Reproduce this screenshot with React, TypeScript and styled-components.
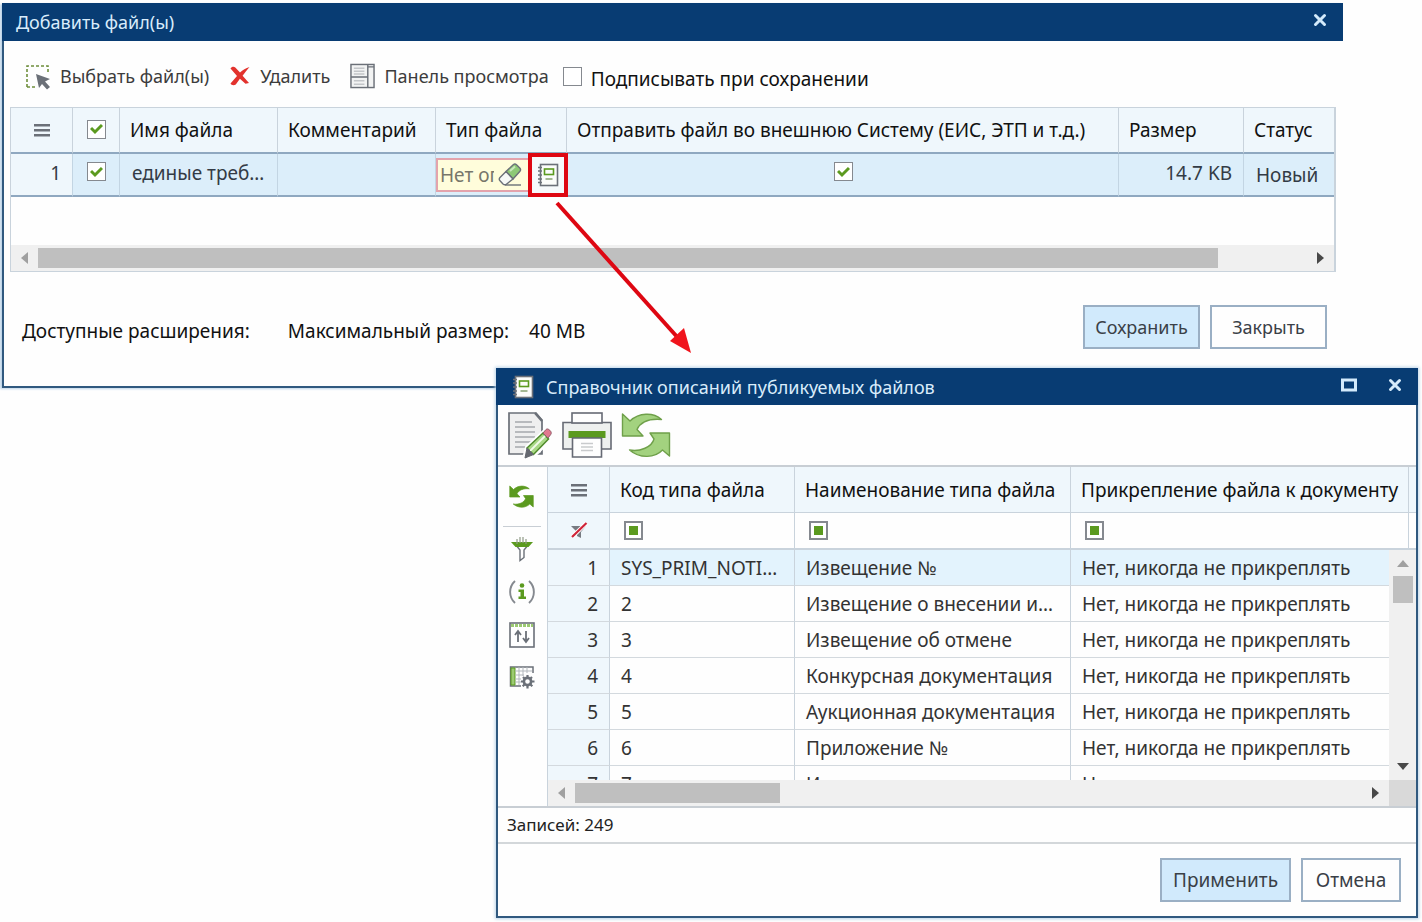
import React from "react";
import styled, { createGlobalStyle, css } from "styled-components";

const navy = "#083c73";
const line = "#c9d3dc";
const green = "#5b9a1f";
const grey = "#6b7078";

const GlobalStyle = createGlobalStyle`
  *, *::before, *::after { box-sizing: border-box; }
  body {
    margin: 0;
    background: #fefefe;
    color: #222;
    font-family: "Noto Sans", "Open Sans", sans-serif;
    font-size: 19px;
    line-height: 24px;
  }
  button, input { font: inherit; color: inherit; }
  button { cursor: pointer; }
  svg { display: block; flex: none; }
`;

const Desktop = styled.main`
  position: relative;
  min-height: 100vh;
  overflow: hidden;
`;

const Window = styled.section`
  position: absolute;
  display: flex;
  flex-direction: column;
  background: #fefefe;
  border: 2px solid #30597f;
  border-top: 0;
  box-shadow: 0 0 3px 1px #bcd4e8;
`;

const UploadWindow = styled(Window)`
  top: 3px;
  left: 2px;
  right: 79px;
  border-right: 0;
  box-shadow: -2px 1px 2px 0 #bcd4e8;
`;

const DirectoryWindow = styled(Window)`
  top: 368px;
  left: 496px;
  right: 4px;
`;

const TitleBar = styled.header<{ $inset?: boolean }>`
  display: flex;
  align-items: center;
  height: ${(p) => (p.$inset ? "37px" : "38px")};
  margin-left: -2px;
  margin-right: ${(p) => (p.$inset ? "-2px" : "0")};
  padding: 0 14px 0 ${(p) => (p.$inset ? "16px" : "14px")};
  background: ${navy};
  color: #d9ecfb;
`;

const Title = styled.h2<{ $gap?: boolean }>`
  flex: 1;
  margin: 0 0 0 ${(p) => (p.$gap ? "12px" : "0")};
  font-size: 18px;
  font-weight: 400;
`;

const TitleButton = styled.button`
  display: grid;
  place-items: center;
  width: 18px;
  height: 24px;
  margin-left: 28px;
  padding: 0 0 4px;
  border: 0;
  background: none;
`;

const Toolbar = styled.div`
  display: flex;
  align-items: center;
  gap: 20px;
  height: 66px;
  padding: 4px 20px 0;
`;

const ToolButton = styled.button`
  display: flex;
  align-items: center;
  gap: 9px;
  padding: 0;
  border: 0;
  background: none;
  color: #3c3c3c;
  font-size: 18px;
`;

const SignLabel = styled.label`
  display: flex;
  align-items: center;
  gap: 9px;
  margin-left: -6px;
  color: #111;
`;

const SignText = styled.span`
  padding-top: 6px;
`;

const CheckFrame = styled.span`
  display: inline-grid;
  vertical-align: middle;
  place-items: center;
  width: 19px;
  height: 19px;
  > * { grid-area: 1 / 1; }
  svg { pointer-events: none; }
`;

const CheckInput = styled.input`
  appearance: none;
  width: 19px;
  height: 19px;
  margin: 0;
  border: 1px solid #85898f;
  background: #fff;
  & + svg { visibility: hidden; }
  &:checked + svg { visibility: visible; }
`;

const Grid = styled.div`
  display: flex;
  flex-direction: column;
  margin: 0 7px 0 6px;
  border: 1px solid ${line};
  border-right: 2px solid ${line};
`;

const Table = styled.table`
  width: 100%;
  table-layout: fixed;
  border-collapse: separate;
  border-spacing: 0;
`;

const Col = styled.col<{ $w?: number }>`
  ${(p) => p.$w && css`width: ${p.$w}px;`}
`;

const HeadCell = styled.th<{ $center?: boolean }>`
  height: 46px;
  padding: 0 0 0 ${(p) => (p.$center ? "0" : "10px")};
  border-right: 1px solid ${line};
  border-bottom: 2px solid #8fa8c0;
  background: #eff7fc;
  color: #111;
  font-weight: 400;
  text-align: ${(p) => (p.$center ? "center" : "left")};
  white-space: nowrap;
  svg { margin: 0 auto; }
  ${CheckFrame} { margin-bottom: 4px; }
  &:last-child { border-right: 0; }
`;

const FileCell = styled.td<{ $align?: string; $tone?: string; $raised?: boolean }>`
  height: 43px;
  padding: 0 11px ${(p) => (p.$raised ? "4px" : "0")} 12px;
  border-right: 1px solid #c3d5e3;
  border-bottom: 2px solid #8fa8c0;
  background: ${(p) => p.$tone ?? "#dceefa"};
  color: #333b45;
  text-align: ${(p) => p.$align ?? "left"};
  white-space: nowrap;
  overflow: hidden;
  text-overflow: ellipsis;
  ${CheckFrame} { margin-bottom: 4px; }
  &:last-child { border-right: 0; }
`;

const FieldCell = styled(FileCell)`
  padding: 0;
  overflow: visible;
`;

const Field = styled.div`
  display: flex;
  align-items: center;
  height: 34px;
  border: 2px solid #e3a3ac;
  border-right: 0;
  background: #fffddb;
`;

const FieldInput = styled.input`
  width: 56px;
  padding: 0 0 0 2px;
  border: 0;
  background: none;
  color: #77766a;
`;

const IconButton = styled.button`
  display: grid;
  place-items: center;
  padding: 0;
  border: 0;
  background: none;
`;

const ClearButton = styled(IconButton)`
  margin-left: 3px;
`;

const PickButton = styled(IconButton)`
  position: relative;
  width: 34px;
  height: 36px;
  margin: 0 1px 0 auto;
  background: #f6f9fb;
  &::after {
    content: "";
    position: absolute;
    inset: -4px -3px;
    border: 4px solid #de0712;
  }
`;

const EmptyRows = styled.div`
  height: 48px;
`;

const HScroll = styled.div`
  display: flex;
  align-items: center;
  height: 26px;
  padding: 0 9px;
  background: #f0f0f0;
`;

const HTrack = styled.div`
  flex: 1;
  margin: 0 9px;
`;

const HThumb = styled.div<{ $share: string }>`
  width: ${(p) => p.$share};
  height: 20px;
  background: #bfbfbf;
`;

const UploadFooter = styled.footer`
  display: flex;
  align-items: center;
  gap: 10px;
  padding: 33px 16px 37px 18px;
  color: #111;
`;

const FooterText = styled.span`
  margin-top: 8px;
  margin-right: 28px;
`;

const SizeText = styled(FooterText)`
  display: flex;
  flex: 1;
  gap: 20px;
  margin-right: 0;
`;

const Button = styled.button<{ $primary?: boolean; $w: number; $large?: boolean }>`
  width: ${(p) => p.$w}px;
  height: 44px;
  padding: 0;
  border: 2px solid #9aafc4;
  background: ${(p) => (p.$primary ? "#d1eafc" : "#fefefe")};
  color: #3a4047;
  font-size: ${(p) => (p.$large ? 19 : 18)}px;
`;

const BigToolbar = styled.div`
  display: flex;
  align-items: center;
  gap: 9px;
  height: 60px;
  padding: 0 9px;
`;

const Content = styled.div`
  display: flex;
  border-top: 2px solid #c8ced4;
  border-bottom: 2px solid #c8ced4;
`;

const SideBar = styled.nav`
  display: flex;
  flex-direction: column;
  align-items: center;
  gap: 17px;
  width: 50px;
  padding: 17px 2px 0 0;
  border-right: 1px solid ${line};
`;

const SideDivider = styled.hr`
  width: 38px;
  margin: 0 0 -8px;
  border: 0;
  border-top: 1px solid #c8ced4;
`;

const DirectoryGrid = styled.div`
  display: flex;
  flex: 1;
  flex-direction: column;
  min-width: 0;
`;

const DirHead = styled(HeadCell)`
  border-bottom: 1px solid ${line};
`;

const FilterCell = styled.td<{ $tone?: string }>`
  height: 37px;
  padding: 0 0 0 14px;
  border-right: 1px solid ${line};
  border-bottom: 2px solid ${line};
  background: ${(p) => p.$tone ?? "#fefefe"};
  line-height: 0;
  &:last-child { border-right: 0; }
  &:first-child { padding: 0; svg { margin: 0 auto; } }
`;

const FilterButton = styled.button`
  width: 19px;
  height: 19px;
  padding: 0;
  border: 2px solid #85898f;
  background: ${green};
  box-shadow: inset 0 0 0 3px #fff;
`;

const DirBody = styled.div`
  display: flex;
  height: 230px;
`;

const Viewport = styled.div`
  flex: 1;
  min-width: 0;
  overflow: hidden;
`;

const DirCell = styled.td<{ $active?: boolean }>`
  height: 36px;
  padding: 0 11px;
  border-right: 1px solid ${line};
  border-bottom: 1px solid #d3d9de;
  background: ${(p) => (p.$active ? "#e3f3fd" : "#fefefe")};
  color: #333;
  white-space: nowrap;
  overflow: hidden;
  text-overflow: ellipsis;
  &:first-child { background: #eff7fc; text-align: right; }
  &:last-child { border-right: 0; }
`;

const VScroll = styled.div`
  display: flex;
  flex-direction: column;
  align-items: center;
  width: 27px;
  padding: 9px 0 9px;
  background: #f0f0f0;
`;

const VTrack = styled.div`
  flex: 1;
  padding-top: 8px;
`;

const VThumb = styled.div`
  width: 20px;
  height: 27px;
  background: #bfbfbf;
`;

const ScrollRow = styled.div`
  display: grid;
  grid-template-columns: 1fr 27px;
`;

const Corner = styled.div`
  height: 26px;
  background: #d9d9d9;
`;

const StatusBar = styled.div`
  height: 36px;
  padding: 5px 9px;
  border-bottom: 2px solid #d3d7da;
  font-size: 17px;
`;

const Actions = styled.footer`
  display: flex;
  justify-content: flex-end;
  gap: 10px;
  padding: 14px 15px 14px;
`;

const Pointer = styled.svg`
  position: absolute;
  top: 195px;
  left: 549px;
  pointer-events: none;
`;

const CloseIcon = () => (
  <svg width="16" height="16" viewBox="0 0 16 16" stroke="#d3eafb" strokeWidth="3" strokeLinecap="round">
    <path d="M3.500 3.500l9 9M12.500 3.500l-9 9" />
  </svg>
);

const MaximizeIcon = () => (
  <svg width="16" height="14" viewBox="0 0 16 14" fill="none" stroke="#d3eafb" strokeWidth="3">
    <rect x="1.500" y="2" width="13" height="10" />
  </svg>
);

const SelectIcon = () => (
  <svg width="27" height="27" viewBox="0 0 27 27">
    <path d="M3 24V3h21v8M3 24h8" fill="none" stroke="#6f8f3c" strokeWidth="1.600" strokeDasharray="3 2" />
    <path d="M12 11l14 5-5 2.500 5 5.500-3 2.500-5-5.500-3 4z" fill="#6b7078" />
  </svg>
);

const DeleteIcon = () => (
  <svg width="22" height="22" viewBox="0 0 22 22">
    <path d="M1.500 3.500c1-2 3.500-2.500 4.800-1L11 7.500C13.500 5 17 3 20.500 2 18 5 15.500 8 13.600 10.800l6.400 7.200-3.500.8-5.600-5L6.800 19.500c-2 1.300-4.500.7-5.300-1C3.500 16 6 13.500 8 11z" fill="#e2322d" />
  </svg>
);

const PanelIcon = () => (
  <svg width="25" height="26" viewBox="0 0 26 26" fill="none" stroke={grey} strokeWidth="1.500">
    <rect x="1" y="1" width="24" height="24" fill="#f2f3f3" />
    <path d="M18.500 1v24M1 14h17.500M18.500 3.500H25" />
    <path d="M4 5h11M4 8h11M4 11h11M4 18h11M4 21.500h11" stroke="#c3c6c9" />
  </svg>
);

const MenuIcon = () => (
  <svg width="16" height="14" viewBox="0 0 16 14" fill={grey}>
    <path d="M0 1h16v2.600H0zM0 6h16v2.600H0zM0 11h16v2.600H0z" />
  </svg>
);

const EraserIcon = () => (
  <svg width="26" height="26" viewBox="0 0 26 26" stroke={grey} strokeWidth="1.400" strokeLinejoin="round">
    <path d="M9 9.500L16.500 2.500c1-.8 2-.7 3 .2l3.500 3.500c.8 1 .7 2 0 3L16 17z" fill="#8ec976" />
    <path d="M9 9.500L3 15.500c-1 1.200-1 2.200 0 3.200l3 3.300c1 .8 2.600.9 3.700 0L16 17z" fill="#f7faf7" />
    <path d="M8 23h16" fill="none" />
    <path d="M13 9l5-4.500" stroke="#c9e8bd" strokeWidth="2" />
  </svg>
);

const NotebookIcon = () => (
  <svg width="22" height="24" viewBox="0 0 22 24" fill="none" stroke={grey}>
    <rect x="3.500" y="1.500" width="17" height="21" fill="#fbfcfa" strokeWidth="1.600" />
    <rect x="7.500" y="6" width="9" height="5.500" stroke={green} strokeWidth="1.600" />
    <path d="M8.500 16h7" stroke="#8fa77a" strokeWidth="1.600" />
    <path d="M1 4.500h4M1 8h4M1 12h4M1 16h4M1 19.500h4" strokeWidth="1.500" />
  </svg>
);

const EditDocIcon = () => (
  <svg width="46" height="50" viewBox="0 0 46 50">
    <path d="M2 3h27l6 7v34H2z" fill="#efefef" stroke={grey} strokeWidth="1.700" />
    <path d="M28 3l7 8" fill="none" stroke={grey} strokeWidth="2.400" />
    <path d="M8 12h17M8 17h20M8 22h20M8 27h20M8 32h17M8 37h12" stroke="#b8babd" strokeWidth="2" />
    <path d="M17 47l2.500-10L38 20l8 8-18 17z" fill="#fefefe" stroke="#fefefe" strokeWidth="3" />
    <path d="M20 38l16-15 5.500 6-15 15.500z" fill="#a9d886" stroke="#4f8a2a" strokeWidth="1.500" />
    <path d="M23 41l15-15" stroke="#f1fae8" strokeWidth="1.800" />
    <path d="M20 38l6.500 6.500L18 48z" fill="#656870" stroke="#656870" />
    <path d="M36 23l3-3.500c1.200-1 2.300-.6 3.800.8s2 3 .8 4.400L41 28z" fill="#e2788f" stroke="#8f5d68" />
    <path d="M32 44h3v-3z" fill={grey} />
  </svg>
);

const PrinterIcon = () => (
  <svg width="50" height="48" viewBox="0 0 50 48" stroke="#666a74" strokeWidth="1.600">
    <path d="M1 11.500h48V38H1z" fill="#eef0ef" />
    <rect x="10" y="2" width="30" height="10" fill="#fefefe" />
    <rect x="6.500" y="20" width="37" height="7" fill={green} stroke="none" />
    <path d="M10.500 27h29v19h-29z" fill="#fefefe" />
    <path d="M19 32.500h12M19 36h12M19 39.500h12" stroke="#c9cbcd" strokeWidth="1.400" />
  </svg>
);

const SyncIcon = ({ size, fill, stroke }: { size: number; fill: string; stroke: string }) => (
  <svg width={size} height={size} viewBox="0 0 50 48" fill={fill} stroke={stroke} strokeWidth="1.400" strokeLinejoin="round">
    <path d="M1.500 3V25H22L16 18.500C19.500 11 28.500 7.500 40.500 8.500 32 1 18 1.500 9 10z" />
    <path d="M48.500 22H29l4 6C31 36 19 41 8.500 39 19 48 34 47 41.500 39l7 6z" />
  </svg>
);

const ClearFilterIcon = () => (
  <svg width="18" height="18" viewBox="0 0 18 18">
    <path d="M1 4h15l-5 6v6l-4-2v-4z" fill="#777b82" />
    <path d="M2 15L16.500 1" stroke="#fff" strokeWidth="4" />
    <path d="M2 15L16.500 1" stroke="#cf2438" strokeWidth="2.200" />
  </svg>
);

const FunnelIcon = () => (
  <svg width="26" height="26" viewBox="0 0 26 26" fill="none" stroke={grey} strokeWidth="1.400">
    <path d="M6 8l5 6v10.500l4-3V14l5-6" fill="#fff" />
    <path d="M2 6h22l-4.500 5h-13z" fill={green} stroke="none" />
    <path d="M8 3v5M11 1v6M14 1v6M17 3v5" stroke="#8f9a86" strokeWidth="1.200" />
  </svg>
);

const InfoIcon = () => (
  <svg width="26" height="26" viewBox="0 0 26 26" fill="none">
    <path d="M6 2C-.5 8-.5 18 6 24M20 2c6.500 6 6.500 16 0 22" stroke="#85898f" strokeWidth="1.900" />
    <circle cx="13" cy="6.500" r="2.300" fill={green} />
    <path d="M9.500 10.500H15v7h2V20H9.500v-2.500h2V13h-2z" fill={green} />
  </svg>
);

const SortPanelIcon = () => (
  <svg width="26" height="26" viewBox="0 0 26 26" fill="none" stroke={grey}>
    <rect x="1" y="1" width="24" height="24" strokeWidth="1.600" fill="#fff" />
    <path d="M2 3.500h22" stroke="#9cca72" strokeWidth="3" strokeDasharray="3 1" />
    <path d="M9 20V9.500M6 13l3-4 3 4M17 9v10.500M14 16l3 4 3-4" strokeWidth="1.800" />
  </svg>
);

const TableSettingsIcon = () => (
  <svg width="26" height="26" viewBox="0 0 26 26" fill="none" stroke={grey}>
    <path d="M12 21H1.500V2H24v6" strokeWidth="1.500" />
    <path d="M2 3h4v17H2z" fill="#9cca72" stroke={green} />
    <path d="M10 2v18M14 2v9M18 2v6M6 6h17M6 10h9M6 14h6M6 17h6" stroke="#b3b8bd" />
    <circle cx="18.500" cy="16.500" r="3.600" strokeWidth="2.600" fill="#fff" />
    <path d="M18.500 10v3M18.500 20v3.500M12 16.500h3M22 16.500h3.500M14 12l2 2M21 19l2.300 2.300M23 12l-2 2M16 19l-2.300 2.300" strokeWidth="2.200" />
  </svg>
);

const arrows = {
  left: "M8 0v12L1 6z",
  right: "M1 0v12l7-6z",
  up: "M0 8h12L6 1z",
  down: "M0 1h12L6 8z",
};

const ScrollArrow = ({ dir, dim }: { dir: keyof typeof arrows; dim?: boolean }) => {
  const upright = dir === "up" || dir === "down";
  return (
    <svg width={upright ? 12 : 9} height={upright ? 9 : 12} fill={dim ? "#a0a0a0" : "#484848"}>
      <path d={arrows[dir]} />
    </svg>
  );
};

const Check = ({ label, id, on }: { label?: string; id?: string; on?: boolean }) => (
  <CheckFrame>
    <CheckInput type="checkbox" id={id} aria-label={label} defaultChecked={on} />
    <svg width="13" height="12" viewBox="0 0 13 12" fill="none" stroke={green} strokeWidth="3">
      <path d="M1 5l4 4 7-7" />
    </svg>
  </CheckFrame>
);

const directory = [
  ["SYS_PRIM_NOTICE", "Извещение №"],
  ["2", "Извещение о внесении изменений"],
  ["3", "Извещение об отмене"],
  ["4", "Конкурсная документация"],
  ["5", "Аукционная документация"],
  ["6", "Приложение №"],
  ["7", "Иное"],
];

const DirectoryCols = ({ tail }: { tail?: boolean }) => (
  <colgroup>
    <Col $w={62} />
    <Col $w={185} />
    <Col $w={276} />
    <Col />
    {tail && <Col $w={7} />}
  </colgroup>
);

const Upload = () => (
  <UploadWindow aria-label="Добавить файл(ы)">
    <TitleBar>
      <Title>Добавить файл(ы)</Title>
      <TitleButton aria-label="Закрыть окно"><CloseIcon /></TitleButton>
    </TitleBar>
    <Toolbar>
      <ToolButton><SelectIcon />Выбрать файл(ы)</ToolButton>
      <ToolButton><DeleteIcon />Удалить</ToolButton>
      <ToolButton><PanelIcon />Панель просмотра</ToolButton>
      <SignLabel htmlFor="sign"><Check id="sign" /><SignText>Подписывать при сохранении</SignText></SignLabel>
    </Toolbar>
    <Grid>
      <Table>
        <colgroup>
          <Col $w={62} />
          <Col $w={47} />
          <Col $w={158} />
          <Col $w={158} />
          <Col $w={131} />
          <Col />
          <Col $w={125} />
          <Col $w={90} />
        </colgroup>
        <thead>
          <tr>
            <HeadCell $center aria-label="Меню"><MenuIcon /></HeadCell>
            <HeadCell $center><Check on label="Выбрать все" /></HeadCell>
            <HeadCell>Имя файла</HeadCell>
            <HeadCell>Комментарий</HeadCell>
            <HeadCell>Тип файла</HeadCell>
            <HeadCell>Отправить файл во внешнюю Систему (ЕИС, ЭТП и т.д.)</HeadCell>
            <HeadCell>Размер</HeadCell>
            <HeadCell>Статус</HeadCell>
          </tr>
        </thead>
        <tbody>
          <tr>
            <FileCell $align="right" $tone="#eff7fc" $raised>1</FileCell>
            <FileCell $align="center" $raised><Check on label="Выбрать файл" /></FileCell>
            <FileCell $raised>единые требования</FileCell>
            <FileCell />
            <FieldCell>
              <Field>
                <FieldInput aria-label="Тип файла" defaultValue="Нет описания" />
                <ClearButton aria-label="Очистить"><EraserIcon /></ClearButton>
                <PickButton aria-label="Выбрать из справочника"><NotebookIcon /></PickButton>
              </Field>
            </FieldCell>
            <FileCell $align="center" $raised><Check on label="Отправить во внешнюю систему" /></FileCell>
            <FileCell $align="right" $raised>14.7 KB</FileCell>
            <FileCell>Новый</FileCell>
          </tr>
        </tbody>
      </Table>
      <EmptyRows />
      <HScroll>
        <ScrollArrow dir="left" dim />
        <HTrack><HThumb $share="93%" /></HTrack>
        <ScrollArrow dir="right" />
      </HScroll>
    </Grid>
    <UploadFooter>
      <FooterText>Доступные расширения:</FooterText>
      <SizeText><span>Максимальный размер:</span><span>40 MB</span></SizeText>
      <Button $primary $w={117}>Сохранить</Button>
      <Button $w={117}>Закрыть</Button>
    </UploadFooter>
  </UploadWindow>
);

const Directory = () => (
  <DirectoryWindow aria-label="Справочник описаний публикуемых файлов">
    <TitleBar $inset>
      <NotebookIcon />
      <Title $gap>Справочник описаний публикуемых файлов</Title>
      <TitleButton aria-label="Развернуть"><MaximizeIcon /></TitleButton>
      <TitleButton aria-label="Закрыть окно"><CloseIcon /></TitleButton>
    </TitleBar>
    <BigToolbar>
      <IconButton aria-label="Редактировать"><EditDocIcon /></IconButton>
      <IconButton aria-label="Печать"><PrinterIcon /></IconButton>
      <IconButton aria-label="Обновить"><SyncIcon size={50} fill="#a3d27f" stroke="#6fa04a" /></IconButton>
    </BigToolbar>
    <Content>
      <SideBar>
        <IconButton aria-label="Обновить список"><SyncIcon size={25} fill={green} stroke={green} /></IconButton>
        <SideDivider />
        <IconButton aria-label="Фильтр"><FunnelIcon /></IconButton>
        <IconButton aria-label="Информация"><InfoIcon /></IconButton>
        <IconButton aria-label="Сортировка"><SortPanelIcon /></IconButton>
        <IconButton aria-label="Настройка таблицы"><TableSettingsIcon /></IconButton>
      </SideBar>
      <DirectoryGrid>
        <Table>
          <DirectoryCols tail />
          <thead>
            <tr>
              <DirHead $center aria-label="Меню"><MenuIcon /></DirHead>
              <DirHead>Код типа файла</DirHead>
              <DirHead>Наименование типа файла</DirHead>
              <DirHead>Прикрепление файла к документу</DirHead>
              <DirHead $center />
            </tr>
          </thead>
          <tbody>
            <tr>
              <FilterCell $tone="#eff7fc"><ClearFilterIcon /></FilterCell>
              <FilterCell><FilterButton aria-label="Фильтр по коду" /></FilterCell>
              <FilterCell><FilterButton aria-label="Фильтр по наименованию" /></FilterCell>
              <FilterCell><FilterButton aria-label="Фильтр по прикреплению" /></FilterCell>
              <FilterCell />
            </tr>
          </tbody>
        </Table>
        <DirBody>
          <Viewport>
            <Table aria-label="Типы файлов">
              <DirectoryCols />
              <tbody>
                {directory.map(([code, name], i) => (
                  <tr key={code}>
                    <DirCell $active={i === 0}>{i + 1}</DirCell>
                    <DirCell $active={i === 0}>{code}</DirCell>
                    <DirCell $active={i === 0}>{name}</DirCell>
                    <DirCell $active={i === 0}>Нет, никогда не прикреплять</DirCell>
                  </tr>
                ))}
              </tbody>
            </Table>
          </Viewport>
          <VScroll>
            <ScrollArrow dir="up" dim />
            <VTrack><VThumb /></VTrack>
            <ScrollArrow dir="down" />
          </VScroll>
        </DirBody>
        <ScrollRow>
          <HScroll>
            <ScrollArrow dir="left" dim />
            <HTrack><HThumb $share="26%" /></HTrack>
            <ScrollArrow dir="right" />
          </HScroll>
          <Corner />
        </ScrollRow>
      </DirectoryGrid>
    </Content>
    <StatusBar>Записей: 249</StatusBar>
    <Actions>
      <Button $primary $large $w={131}>Применить</Button>
      <Button $large $w={100}>Отмена</Button>
    </Actions>
  </DirectoryWindow>
);

export default function App() {
  return (
    <Desktop>
      <GlobalStyle />
      <Upload />
      <Directory />
      <Pointer width="150" height="164" viewBox="0 0 150 164" aria-hidden="true">
        <path d="M8 8l122 136" stroke="#de0712" strokeWidth="4" />
        <path d="M142 158l-21-12 14-13z" fill="#f0141c" />
      </Pointer>
    </Desktop>
  );
}
